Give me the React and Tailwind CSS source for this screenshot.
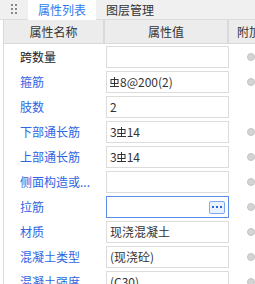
import React from "react";

const Rebar = () => (
  <svg width="9" height="11" viewBox="0 0 9 11" className="inline-block mr-[1px]" style={{ verticalAlign: "-1px" }}>
    <line x1="4.5" y1="0" x2="4.5" y2="9" stroke="#333" strokeWidth="1" />
    <rect x="1" y="2.5" width="7" height="4" fill="none" stroke="#333" strokeWidth="1" />
    <line x1="0" y1="9.5" x2="9" y2="9.5" stroke="#333" strokeWidth="1" />
  </svg>
);

const rows = [
  { label: "跨数量", blue: false, value: "", radio: true },
  { label: "箍筋", blue: true, value: <><Rebar />8@200(2)</>, radio: true },
  { label: "肢数", blue: true, value: "2", radio: false },
  { label: "下部通长筋", blue: true, value: <>3<Rebar />14</>, radio: true },
  { label: "上部通长筋", blue: true, value: <>3<Rebar />14</>, radio: true },
  { label: "侧面构造或...", blue: true, value: "", radio: true },
  { label: "拉筋", blue: true, value: "", radio: true, focus: true },
  { label: "材质", blue: true, value: "现浇混凝土", radio: true },
  { label: "混凝土类型", blue: true, value: "(现浇砼)", radio: true },
  { label: "混凝土强度", blue: true, value: "(C30)", radio: true },
];

export default function App() {
  return (
    <div
      className="w-[255px] h-[284px] overflow-hidden bg-white text-[12px] leading-none"
      style={{ fontFamily: '"Noto Sans CJK SC", "Noto Sans", sans-serif' }}
    >
      {/* tab bar */}
      <div className="h-[20px] bg-[#f0f0f0] border-b border-[#dcdcdc] flex items-stretch">
        <div className="w-[28px] flex items-center justify-center">
          <div className="grid grid-cols-2 gap-x-[2px] gap-y-[2px] mt-[-2px]">
            {Array.from({ length: 6 }).map((_, i) => (
              <div key={i} className="w-[2px] h-[2px] bg-[#8a8a8a]" />
            ))}
          </div>
        </div>
        <div className="w-[68px] bg-white flex items-center justify-center text-[#2f7bf0] mb-[-1px]">
          属性列表
        </div>
        <div className="flex items-center pl-[10px] text-[#333]">图层管理</div>
      </div>

      <div className="ml-[3px] border-l border-[#d9d9d9]">
        {/* header */}
        <div className="h-[24px] bg-[#ececec] border-b border-[#d9d9d9] flex text-[#333]">
          <div className="w-[101px] shrink-0 border-r-2 border-[#dadada] flex items-center justify-center">属性名称</div>
          <div className="w-[124px] shrink-0 border-r-2 border-[#dadada] flex items-center justify-center">属性值</div>
          <div className="shrink-0 flex items-center pl-[8px] whitespace-nowrap">附加属性</div>
        </div>

        {rows.map((r, i) => (
          <div key={i} className="h-[25px] flex">
            <div
              className={
                "w-[102px] shrink-0 flex items-center pl-[16px] whitespace-nowrap " +
                (r.blue ? "text-[#2f65e3]" : "text-[#222]")
              }
            >
              {r.label}
            </div>
            <div className="w-[124px] shrink-0 pt-[2px]">
              <div
                className={
                  "h-[22px] w-[123px] border flex items-center pl-[3px] text-[#333] whitespace-nowrap " +
                  (r.focus ? "border-[#5b8ee6]" : "border-[#dcdcdc]")
                }
              >
                <span className="flex-1">{r.value}</span>
                {r.focus && (
                  <div className="w-[16px] h-[13px] mr-[3px] rounded-[2px] border border-[#7ea8ee] bg-[#eaf2fd] flex items-center justify-center gap-[2px]">
                    <div className="w-[2px] h-[2px] bg-[#2f62e0]" />
                    <div className="w-[2px] h-[2px] bg-[#2f62e0]" />
                    <div className="w-[2px] h-[2px] bg-[#2f62e0]" />
                  </div>
                )}
              </div>
            </div>
            <div className="flex-1 flex items-center pl-[17px]">
              {r.radio && (
                <div className="w-[8px] h-[8px] rounded-full bg-[#d4d4d4] border border-[#c4c4c4]" />
              )}
            </div>
          </div>
        ))}
      </div>
    </div>
  );
}
